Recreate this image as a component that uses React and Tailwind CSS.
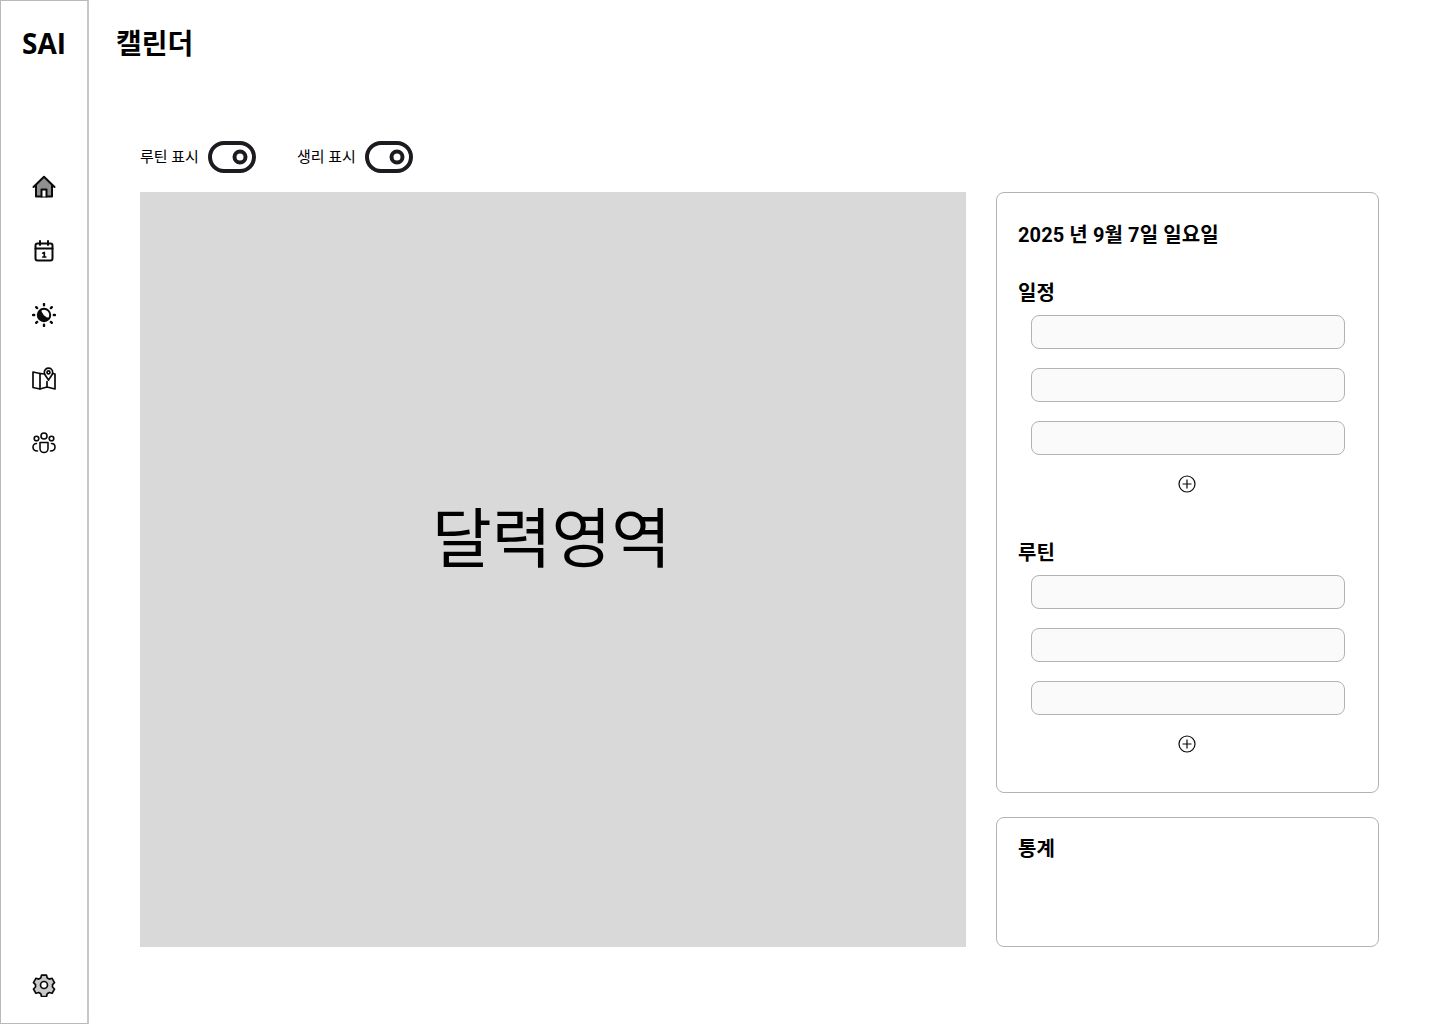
import React from 'react';

const kr = '[font-family:Roboto,"Noto_Sans_CJK_KR",sans-serif]';

function HomeIcon() {
  return (
    <svg width="24" height="24" viewBox="0 0 24 24" fill="none" stroke="#0a0a0a" strokeWidth="2" strokeLinejoin="round" strokeLinecap="round">
      <path d="M4 10v11.500h16V10L12 2.500z" fill="#8f8f8f" stroke="none" />
      <path d="M1.500 12 12 1.800 22.500 12" />
      <path d="M4 10v11.500h16V10" />
      <path d="M9.500 21.500V14.500h5v7" fill="#fff" />
    </svg>
  );
}

function CalendarIcon() {
  return (
    <svg width="24" height="24" viewBox="0 0 24 24" fill="none" stroke="#0a0a0a" strokeWidth="2" strokeLinecap="round" strokeLinejoin="round">
      <rect x="3.500" y="4.500" width="17" height="17" rx="2" />
      <path d="M3.500 9.500h17M8 2v4M16 2v4" />
      <path d="M10.800 14.200 12.300 13.400V18M10.800 18h3" strokeWidth="1.700" />
    </svg>
  );
}

function SunMoonIcon() {
  return (
    <svg width="24" height="24" viewBox="0 0 24 24" fill="none" stroke="#0a0a0a" strokeWidth="2.400" strokeLinecap="round">
      <circle cx="12" cy="12" r="6.200" fill="#0a0a0a" stroke="none" />
      <path d="M9 6.200a6 6 0 0 1 8.800 8.800A10 10 0 0 1 9 6.200z" fill="#fff" stroke="none" />
      <circle cx="12" cy="12" r="6.200" strokeWidth="2" />
      <path d="M12 1v1.200M12 21.800V23M1 12h1.200M21.800 12H23M4.200 4.200l.9.9M18.900 18.900l.9.900M19.800 4.200l-.9.900M5.100 18.900l-.9.900" />
    </svg>
  );
}

function MapPinIcon() {
  return (
    <svg width="24" height="24" viewBox="0 0 24 24" fill="none" stroke="#0a0a0a" strokeWidth="1.700" strokeLinejoin="round" strokeLinecap="round">
      <path d="M8 6.500 1 5v15.500l7 1.500 7-2 8 2V7l-3-.8" />
      <path d="M12.500 7 8 6.500V22M15 14.500V20" />
      <path d="M16.500 1.200a4.200 4.200 0 0 1 4.200 4.200c0 2.700-2.800 5-4.200 7.800-1.400-2.800-4.200-5.100-4.200-7.800a4.200 4.200 0 0 1 4.200-4.200z" fill="#fff" />
      <circle cx="16.500" cy="5.400" r="1.500" />
    </svg>
  );
}

function PeopleIcon() {
  return (
    <svg width="24" height="24" viewBox="0 0 24 24" fill="none" stroke="#0a0a0a" strokeWidth="1.600" strokeLinecap="round" strokeLinejoin="round">
      <circle cx="12" cy="5" r="3" />
      <circle cx="4.500" cy="7.500" r="2.300" />
      <circle cx="19.500" cy="7.500" r="2.300" />
      <path d="M8 11.500h8v6a4 4 0 0 1-8 0z" />
      <path d="M4.500 12.500C2.500 12.500 1 14 1 16c0 2.500 1.500 4 4.500 4M19.500 12.500c2 0 3.500 1.500 3.500 3.500 0 2.500-1.500 4-4.500 4" />
    </svg>
  );
}

function GearIcon() {
  return (
    <svg width="24" height="24" viewBox="0 0 24 24" fill="none" stroke="#0a0a0a" strokeWidth="1.700" strokeLinejoin="round">
      <path d="M9.500 2.500h5l.7 2.800 2.100 1.200 2.800-.8 2.400 4.300-2 2 0 2.400 2 2-2.400 4.300-2.800-.8-2.100 1.200-.7 2.800h-5l-.7-2.800-2.100-1.200-2.800.8L1.500 16.400l2-2 0-2.400-2-2 2.400-4.300 2.800.8 2.100-1.200z" fill="#c9c9c9" transform="translate(0 -.4)" />
      <circle cx="12" cy="12" r="3.500" fill="#fff" />
    </svg>
  );
}

function ToggleOn() {
  return (
    <svg width="48" height="32" viewBox="0 0 48 32" fill="none" stroke="#1d1b20">
      <rect x="2" y="2" width="44" height="28" rx="14" strokeWidth="4" />
      <circle cx="32" cy="16" r="5.500" strokeWidth="4" />
    </svg>
  );
}

function PlusCircle() {
  return (
    <svg width="18" height="18" viewBox="0 0 18 18" fill="none" stroke="#0a0a0a" strokeWidth="1.200">
      <circle cx="9" cy="9" r="8" />
      <path d="M9 4.500v9M4.500 9h9" />
    </svg>
  );
}

function Field() {
  return <div className="h-[34px] w-[314px] rounded-lg border border-[#b3b3b3] bg-[#fafafa]" />;
}

function Group({ title }) {
  return (
    <div>
      <h3 className="text-[20px] leading-[24px] font-bold text-black">{title}</h3>
      <div className="mt-[10px] ml-[13px] flex flex-col gap-[19px]">
        <Field />
        <Field />
        <Field />
      </div>
      <div className="mt-[20px] flex justify-center pr-[1px]">
        <PlusCircle />
      </div>
    </div>
  );
}

function Toggle({ label }) {
  return (
    <div className="flex items-center gap-[9px]">
      <span className="w-[59px] text-[15px] leading-[20px] whitespace-nowrap text-black">{label}</span>
      <ToggleOn />
    </div>
  );
}

export default function App() {
  const items = [HomeIcon, CalendarIcon, SunMoonIcon, MapPinIcon, PeopleIcon];

  return (
    <div className={`flex h-[1024px] w-[1440px] overflow-hidden bg-white ${kr}`}>
      <aside className="flex h-full w-[89px] shrink-0 flex-col items-center border border-r-2 border-[#b9b9b9] border-r-[#c8c8c8]">
        <div className="mt-[24px] h-[36px] text-[28px] leading-[36px] font-bold text-black [font-family:'Open_Sans',sans-serif]">SAI</div>
        <nav className="mt-[114px] flex flex-col items-center gap-[40px] pr-[1px]">
          {items.map((Icon, i) => (
            <Icon key={i} />
          ))}
        </nav>
        <div className="mt-auto mb-[26px] pr-[1px]">
          <GearIcon />
        </div>
      </aside>

      <main className="min-w-0 flex-1">
        <h1 className="mt-[20px] ml-[27px] h-[44px] text-[28px] leading-[44px] font-bold text-black [font-family:'Noto_Sans_CJK_KR',sans-serif]">캘린더</h1>
        <div className="mt-[77px] ml-[51px] flex gap-[41px]">
          <Toggle label="루틴 표시" />
          <Toggle label="생리 표시" />
        </div>
        <div className="mt-[19px] ml-[51px] flex gap-[30px]">
          <div className="flex h-[755px] w-[826px] items-center justify-center bg-[#d9d9d9] pr-[3px] pb-[59px] text-[65px] leading-[80px] text-black">달력영역</div>
          <div className="flex w-[383px] flex-col gap-[24px]">
            <section className="h-[601px] rounded-lg border border-[#b3b3b3] px-[21px] pt-[30px]">
              <h2 className="text-[20px] leading-[24px] font-bold tracking-[0.1px] text-black">2025 년 9월 7일 일요일</h2>
              <div className="mt-[34px] flex flex-col gap-[48px]">
                <Group title="일정" />
                <Group title="루틴" />
              </div>
            </section>
            <section className="h-[130px] rounded-lg border border-[#b3b3b3] px-[21px] pt-[19px]">
              <h3 className="text-[20px] leading-[24px] font-bold text-black">통계</h3>
            </section>
          </div>
        </div>
      </main>
    </div>
  );
}
